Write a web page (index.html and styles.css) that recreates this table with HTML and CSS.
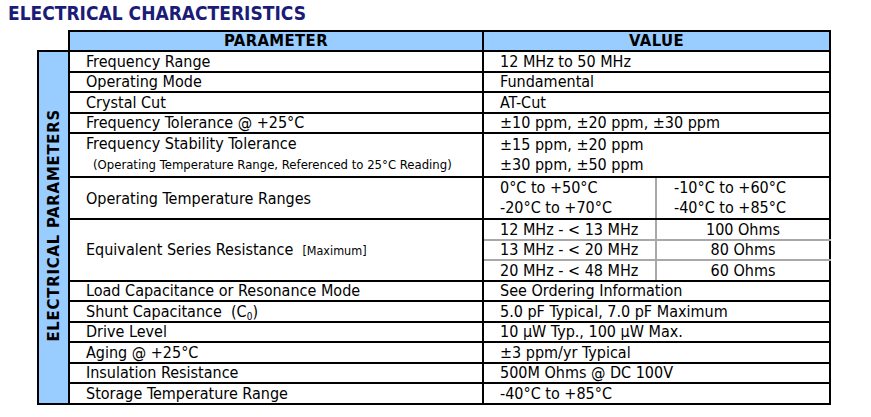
FILE: index.html
```html
<!DOCTYPE html>
<html>
<head>
<meta charset="utf-8">
<link rel="stylesheet" href="styles.css">
</head>
<body>
<h1 class="title">ELECTRICAL CHARACTERISTICS</h1>
<table class="spec">
  <colgroup>
    <col class="c-side"><col class="c-param"><col class="c-v1"><col class="c-v2">
  </colgroup>
  <thead>
    <tr class="hrow">
      <th class="blank"></th>
      <th class="hcell">PARAMETER</th>
      <th class="hcell" colspan="2">VALUE</th>
    </tr>
  </thead>
  <tbody>
    <tr class="r">
      <td class="side" rowspan="15"><span class="vert">ELECTRICAL PARAMETERS</span></td>
      <td class="p">Frequency Range</td>
      <td class="v" colspan="2">12 MHz to 50 MHz</td>
    </tr>
    <tr class="r"><td class="p">Operating Mode</td><td class="v" colspan="2">Fundamental</td></tr>
    <tr class="r"><td class="p">Crystal Cut</td><td class="v" colspan="2">AT-Cut</td></tr>
    <tr class="r"><td class="p">Frequency Tolerance @ +25°C</td><td class="v" colspan="2">±10 ppm, ±20 ppm, ±30 ppm</td></tr>
    <tr class="r-stab">
      <td class="p stack">Frequency Stability Tolerance<span class="note">(Operating Temperature Range, Referenced to 25°C Reading)</span></td>
      <td class="v stack" colspan="2"><span>±15 ppm, ±20 ppm</span><span>±30 ppm, ±50 ppm</span></td>
    </tr>
    <tr class="r-temp">
      <td class="p">Operating Temperature Ranges</td>
      <td class="v stack2 gr"><span>0°C to +50°C</span><span>-20°C to +70°C</span></td>
      <td class="v2 stack2"><span>-10°C to +60°C</span><span>-40°C to +85°C</span></td>
    </tr>
    <tr class="r">
      <td class="p" rowspan="3">Equivalent Series Resistance &nbsp;<span class="small">[Maximum]</span></td>
      <td class="v gr gb">12 MHz - &lt; 13 MHz</td>
      <td class="vc gb">100 Ohms</td>
    </tr>
    <tr class="r"><td class="v gr gb">13 MHz - &lt; 20 MHz</td><td class="vc gb">80 Ohms</td></tr>
    <tr class="r"><td class="v gr">20 MHz - &lt; 48 MHz</td><td class="vc">60 Ohms</td></tr>
    <tr class="r"><td class="p">Load Capacitance or Resonance Mode</td><td class="v" colspan="2">See Ordering Information</td></tr>
    <tr class="r"><td class="p">Shunt Capacitance &nbsp;(C<sub>0</sub>)</td><td class="v" colspan="2">5.0 pF Typical, 7.0 pF Maximum</td></tr>
    <tr class="r"><td class="p">Drive Level</td><td class="v" colspan="2">10 µW Typ., 100 µW Max.</td></tr>
    <tr class="r"><td class="p">Aging @ +25°C</td><td class="v" colspan="2">±3 ppm/yr Typical</td></tr>
    <tr class="r"><td class="p">Insulation Resistance</td><td class="v" colspan="2">500M Ohms @ DC 100V</td></tr>
    <tr class="r"><td class="p">Storage Temperature Range</td><td class="v" colspan="2">-40°C to +85°C</td></tr>
  </tbody>
</table>
</body>
</html>
```
FILE: styles.css
```css
html, body {
  margin: 0;
  padding: 0;
  background: #fff;
}
body {
  font-family: "DejaVu Sans Condensed", "DejaVu Sans", sans-serif;
  color: #000;
}
.title {
  margin: 0;
  padding: 3px 0 0 8px;
  height: 30px;
  box-sizing: border-box;
  font-size: 19px;
  line-height: 20px;
  font-weight: bold;
  color: #1b1b78;
  font-family: "DejaVu Sans Condensed", "DejaVu Sans", sans-serif;
}
.spec {
  margin-left: 37px;
  border-collapse: collapse;
  table-layout: fixed;
  width: 792px;
  font-size: 16px;
}
.c-side { width: 31px; }
.c-param { width: 414px; }
.c-v1 { width: 173px; }
.c-v2 { width: 174px; }
.spec td, .spec th {
  border: 2px solid #000;
  padding: 0;
  vertical-align: middle;
  white-space: nowrap;
  overflow: hidden;
}
.spec th.blank {
  border: none;
}
.hrow { height: 20px; }
.hcell {
  background: #99ccff;
  font-weight: bold;
  font-size: 16.5px;
  letter-spacing: 0.4px;
  text-align: center;
  line-height: 16px;
}
.r { height: 20.5px; }
.r td { line-height: 17px; }
.r-stab { height: 44px; }
.r-temp { height: 40px; }
.side {
  background: #99ccff;
  text-align: center;
}
.vert {
  display: inline-block;
  writing-mode: vertical-rl;
  transform: rotate(180deg);
  font-weight: bold;
  font-size: 16.5px;
  letter-spacing: 0.8px;
  line-height: 20px;
}
.p {
  padding-left: 16px !important;
}
.v {
  padding-left: 16px !important;
}
.v2 {
  padding-left: 17px !important;
}
.vc {
  text-align: center;
}
.stack span, .stack2 span {
  display: block;
}
.stack {
  line-height: 20px;
}
.stack .note {
  font-size: 13px;
  padding-left: 7px;
  line-height: 22px;
}
.stack2 {
  line-height: 20px;
}
.small {
  font-size: 12.5px;
}
sub {
  font-size: 10px;
  vertical-align: -3px;
  line-height: 0;
}
.spec td.gr { border-right-color: #a8a8a8; }
.spec td.gb { border-bottom-color: #a8a8a8; }
```
